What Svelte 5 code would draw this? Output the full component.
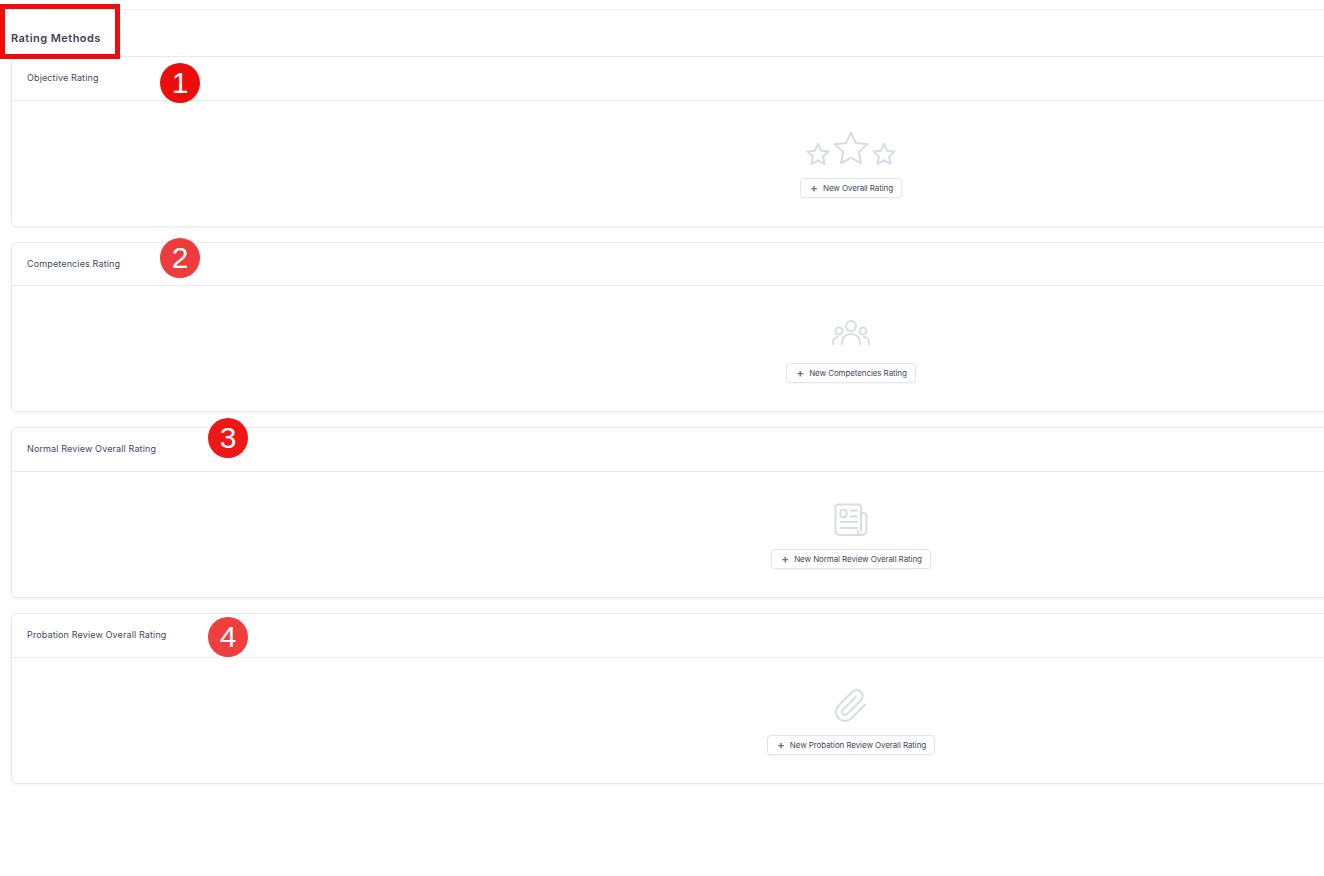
<script>
	const sections = [
		{ title: 'Objective Rating', action: 'New Overall Rating', icon: 'stars', badge: 1, badgeColor: '#ee0d0d', badgeLeft: 148, badgeTop: 6 },
		{ title: 'Competencies Rating', action: 'New Competencies Rating', icon: 'users', badge: 2, badgeColor: '#ee3b3b', badgeLeft: 148, badgeTop: -5 },
		{ title: 'Normal Review Overall Rating', action: 'New Normal Review Overall Rating', icon: 'news', badge: 3, badgeColor: '#ee1616', badgeLeft: 196, badgeTop: -10 },
		{ title: 'Probation Review Overall Rating', action: 'New Probation Review Overall Rating', icon: 'clip', badge: 4, badgeColor: '#ee3e3e', badgeLeft: 196, badgeTop: 3 }
	];

	const star = (cx, cy, r) => {
		let pts = [];
		for (let i = 0; i < 10; i++) {
			const rad = i % 2 ? r * 0.48 : r;
			const a = -Math.PI / 2 + (i * Math.PI) / 5;
			pts.push((cx + rad * Math.cos(a)).toFixed(1) + ',' + (cy + rad * Math.sin(a)).toFixed(1));
		}
		return pts.join(' ');
	};
</script>

<div class="page">
	<div class="topline"></div>
	<h1>Rating Methods</h1>
	<div class="marker"></div>

	<div class="cards">
		{#each sections as s}
			<section class="card">
				<header>{s.title}</header>
				<span class="badge" style="left: {s.badgeLeft}px; top: {s.badgeTop}px; background: {s.badgeColor}">{s.badge}</span>
				<div class="body">
					<div class="icon">
						{#if s.icon === 'stars'}
							<svg width="92" height="36" viewBox="0 0 92 36">
								<polygon points={star(13, 24, 11)} />
								<polygon points={star(46, 18.500, 17)} />
								<polygon points={star(79, 24, 11)} />
							</svg>
						{:else if s.icon === 'users'}
							<svg width="40" height="30" viewBox="0 0 40 30">
								<circle cx="20" cy="7" r="5" />
								<circle cx="8" cy="12" r="3.5" />
								<circle cx="32" cy="12" r="3.5" />
								<path d="M11 25v-2a9 8 0 0 1 18 0v2" />
								<path d="M2 25v-2a5 5 0 0 1 5-5" />
								<path d="M38 25v-2a5 5 0 0 0-5-5" />
							</svg>
						{:else if s.icon === 'news'}
							<svg width="34" height="34" viewBox="0 0 34 34">
								<path d="M27 10h2.500a3 3 0 0 1 3 3v14.500a4.500 4.500 0 0 1-9 0M27 27.500V4.500a3 3 0 0 0-3-3H4.500a3 3 0 0 0-3 3V28a4 4 0 0 0 4 4h22.500" />
								<rect x="6.500" y="7" width="6" height="7" rx="1" />
								<path d="M16.500 7.500h6.500M16.500 13.500h6.500M6.500 19h16.500M6.500 25h16.500" />
							</svg>
						{:else}
							<svg width="36" height="36" viewBox="0 0 24 24" class="thin">
								<path d="M21.44 11.05l-9.19 9.19a6 6 0 0 1-8.49-8.49l9.19-9.19a4 4 0 0 1 5.66 5.66l-9.2 9.19a2 2 0 0 1-2.83-2.83l8.49-8.48" />
							</svg>
						{/if}
					</div>
					<button type="button"><span class="plus">+</span>{s.action}</button>
				</div>
			</section>
		{/each}
	</div>
</div>

<style>
	:global(body) {
		margin: 0;
		background: #fff;
		overflow: hidden;
	}

	.page {
		position: relative;
		width: 1324px;
		height: 876px;
		overflow: hidden;
		font-family: Inter, "Liberation Sans", sans-serif;
		color: #3f4254;
	}

	.topline {
		height: 9px;
		border-bottom: 1px solid #eceef2;
	}

	h1 {
		margin: 0;
		height: 46px;
		box-sizing: border-box;
		padding: 21px 0 0 11px;
		font-size: 11px;
		line-height: 14px;
		font-weight: 600;
		letter-spacing: 0.45px;
		color: #3f4254;
	}

	.marker {
		position: absolute;
		z-index: 2;
		left: 0;
		top: 4px;
		width: 120px;
		height: 55px;
		box-sizing: border-box;
		border: 5px solid #ee0d0d;
	}

	.cards {
		display: flex;
		flex-direction: column;
		gap: 15px;
		width: 1680px;
		margin-left: 11px;
	}

	.card {
		position: relative;
		height: 170.67px;
		box-sizing: border-box;
		border: 1px solid #e9ebef;
		border-radius: 6px;
		box-shadow: 0 1px 3px rgba(30, 40, 70, 0.06);
		background: #fff;
	}

	header {
		height: 43.6px;
		box-sizing: border-box;
		padding: 14px 0 0 15px;
		border-bottom: 1px solid #e9ebef;
		font-size: 9px;
		line-height: 13px;
		letter-spacing: 0.13px;
		color: #3f4a5e;
	}

	.badge {
		position: absolute;
		width: 40px;
		height: 40px;
		border-radius: 50%;
		color: #fff;
		font-family: "Liberation Sans", sans-serif;
		font-size: 30px;
		line-height: 40px;
		text-align: center;
	}

	.body {
		display: flex;
		flex-direction: column;
		align-items: center;
		padding-top: 24px;
	}

	.icon {
		display: flex;
		align-items: center;
		justify-content: center;
		height: 48px;
		margin-bottom: 5px;
	}

	svg {
		display: block;
		fill: none;
		stroke: #d9dce2;
		stroke-width: 2;
		stroke-linecap: round;
		stroke-linejoin: round;
	}

	svg.thin {
		stroke-width: 1.35;
	}

	button {
		display: flex;
		align-items: center;
		height: 20px;
		padding: 0 8px;
		box-sizing: border-box;
		border: 1px solid #e4e6ec;
		border-radius: 4px;
		background: #fff;
		box-shadow: 0 1px 2px rgba(30, 40, 70, 0.05);
		font-family: inherit;
		font-size: 8px;
		letter-spacing: -0.1px;
		color: #3f4a5e;
	}

	.plus {
		width: 10px;
		margin-right: 4px;
		font-size: 11px;
		font-weight: 700;
		line-height: 12px;
		text-align: center;
		color: #6b7280;
	}
</style>
